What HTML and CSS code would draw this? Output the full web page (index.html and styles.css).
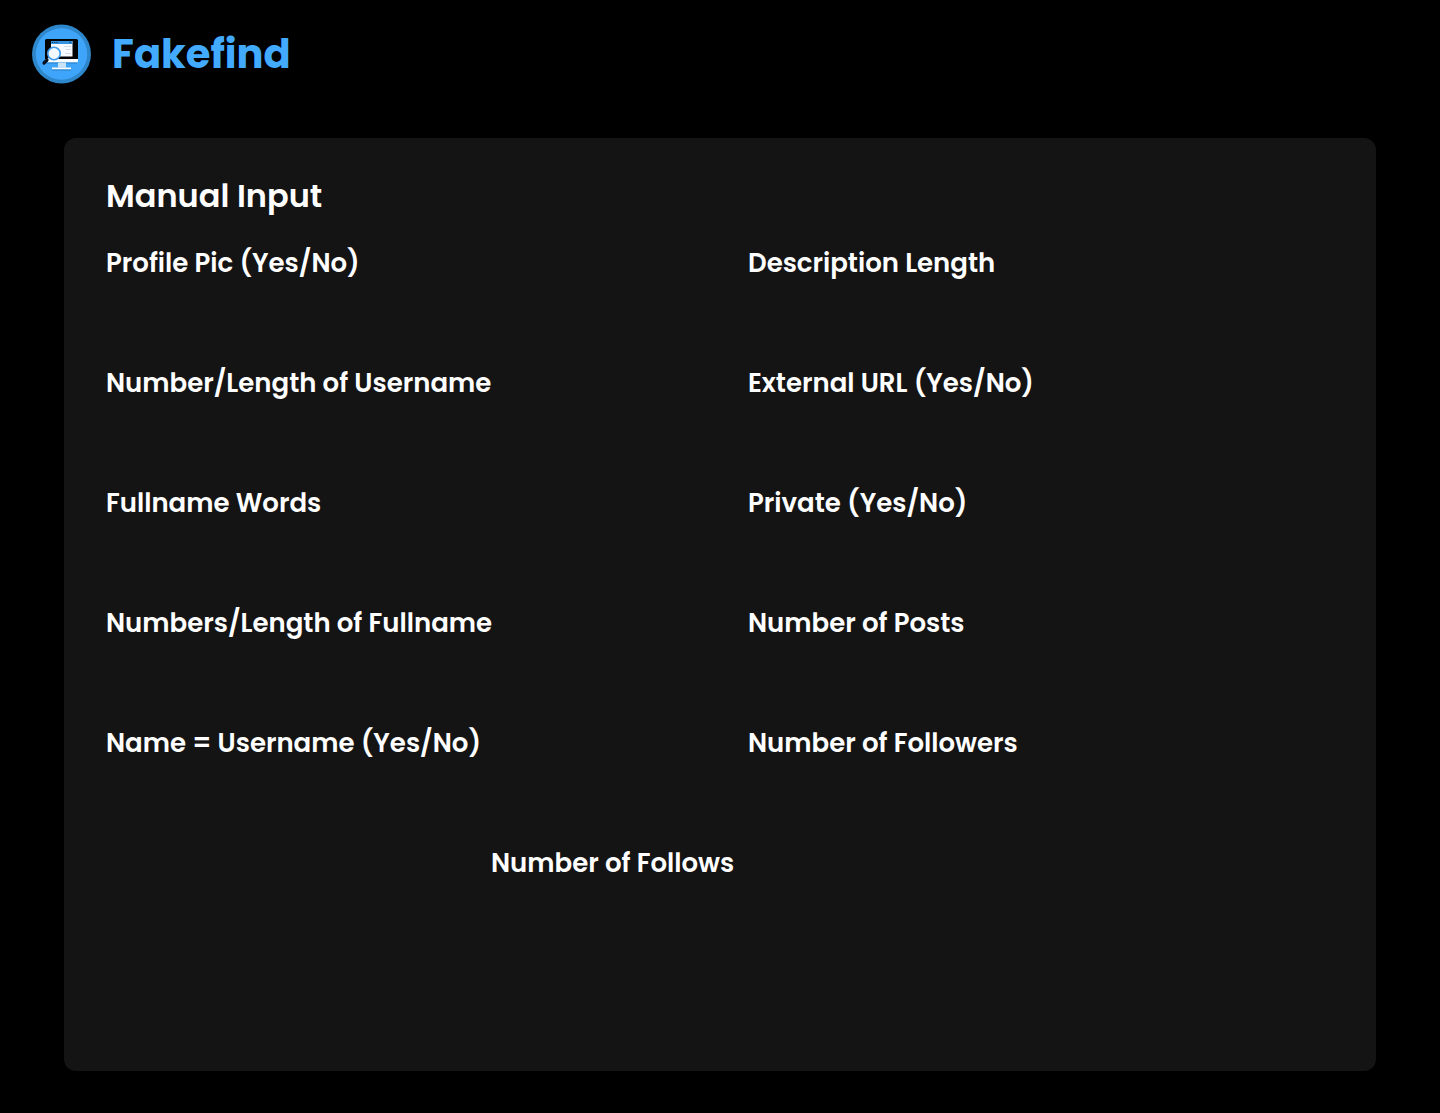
FILE: index.html
```html
<!DOCTYPE html>
<html lang="en">
<head>
<meta charset="utf-8">
<meta name="viewport" content="width=device-width, initial-scale=1">
<title>Fakefind</title>
<link rel="stylesheet" href="styles.css">
</head>
<body>
<header class="header">
  <svg class="logo" viewBox="0 0 60 60" aria-hidden="true">
    <circle cx="29.500" cy="30" r="29.500" fill="#2f87cb"/>
    <circle cx="29.500" cy="30" r="25.700" fill="#3fa5fb"/>
    <path d="M13 16.500q0-1.500 1.500-1.500h30q1.500 0 1.500 1.500V36H13z" fill="#020305"/>
    <path d="M13 35h33v2q0 1.500-1.500 1.500h-30Q13 38.500 13 37z" fill="#f8fbff"/>
    <path d="M14 38.500h31v1H14z" fill="#277fc5"/>
    <path d="M26 38.500h8v5h-8z" fill="#c9e2f6"/>
    <path d="M20 43.500h19v2H20z" fill="#fff"/>
    <path d="M20 45.500h19v1H20z" fill="#277fc5"/>
    <path d="M19 17h21.500v15.500H19z" fill="#f7fafe"/>
    <path d="M19 17h21.500v3H19z" fill="#3592e0"/>
    <path d="M20 18.500h1.200m1 0h1.200m1 0h1.200m12 0h1.200" stroke="#10395e"/>
    <path d="M32 22.500h7M34 25.500h5M33 29.500h6" stroke="#d5dce5"/>
    <path d="m17.500 34-2 2" stroke="#d9ecfb" stroke-width="2"/>
    <path d="m15 36-3 3" stroke="#07111d" stroke-width="3.200" stroke-linecap="round"/>
    <circle cx="22" cy="29.500" r="6.200" fill="#f2f9ff" stroke="#3e9dee" stroke-width="1.600"/>
  </svg>
  <h1 class="brand">Fakefind</h1>
</header>
<main class="card">
  <h2 class="title">Manual Input</h2>
  <div class="fields">
    <p class="field">Profile Pic (Yes/No)</p>
    <p class="field">Description Length</p>
    <p class="field">Number/Length of Username</p>
    <p class="field">External URL (Yes/No)</p>
    <p class="field">Fullname Words</p>
    <p class="field">Private (Yes/No)</p>
    <p class="field">Numbers/Length of Fullname</p>
    <p class="field">Number of Posts</p>
    <p class="field">Name = Username (Yes/No)</p>
    <p class="field">Number of Followers</p>
    <p class="field field-center">Number of Follows</p>
  </div>
</main>
</body>
</html>
```
FILE: styles.css
```css
* {
  box-sizing: border-box;
}

body {
  margin: 0;
  background: #000;
  color: #fff;
  font-family: Poppins, Inter, sans-serif;
}

.header {
  display: flex;
  align-items: center;
  gap: 20px;
  padding: 24px 32px;
}

.logo {
  width: 60px;
  height: 60px;
}

.brand {
  margin: 0;
  color: #42aaff;
  font-size: 40px;
  font-weight: 700;
  line-height: 60px;
}

.card {
  margin: 30px 64px 42px;
  padding: 34px 42px 108px;
  border-radius: 12px;
  background: #141414;
}

.title {
  margin: 0 0 23px;
  font-size: 32px;
  font-weight: 600;
  line-height: 48px;
}

.fields {
  display: grid;
  grid-template-columns: 1fr 1fr;
  grid-auto-rows: 120px;
  column-gap: 56px;
}

.field {
  margin: 0;
  font-size: 26px;
  font-weight: 600;
  line-height: 40px;
}

.field-center {
  grid-column: span 2;
  justify-self: center;
  width: 458px;
  max-width: 100%;
}
```
